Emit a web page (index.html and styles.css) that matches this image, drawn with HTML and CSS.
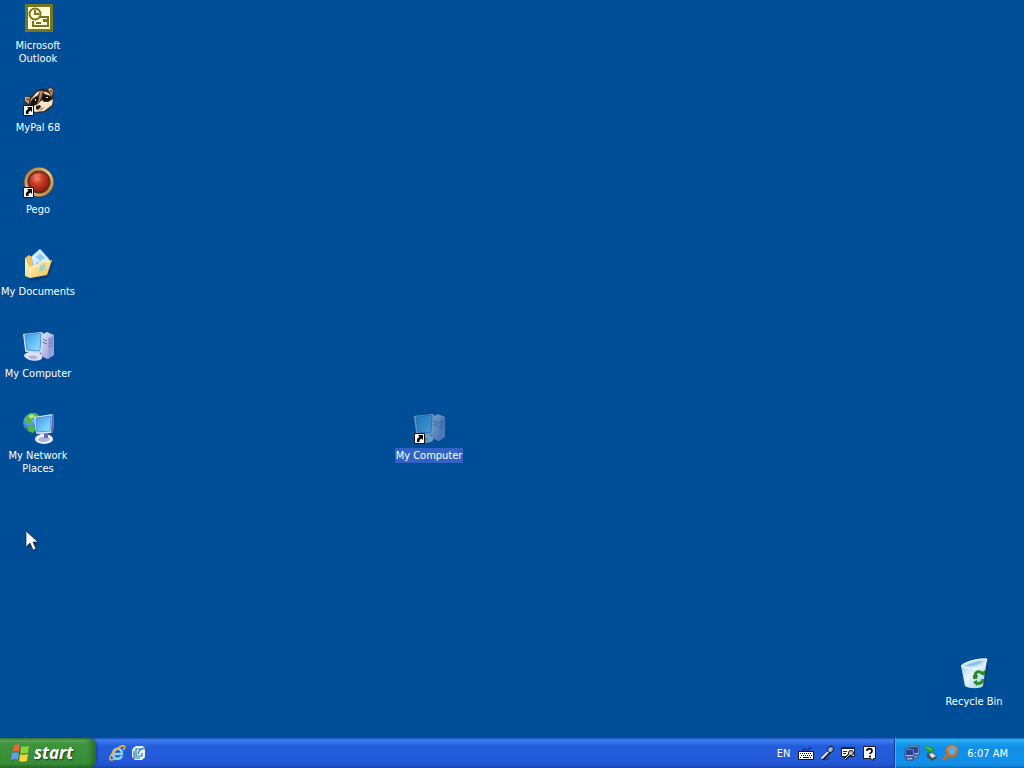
FILE: index.html
```html
<!DOCTYPE html>
<html lang="en">
<head>
<meta charset="utf-8">
<title>Desktop</title>
<link rel="stylesheet" href="styles.css">
</head>
<body>
<svg class="defs" aria-hidden="true">
  <defs>
    <linearGradient id="screen" x1="0" y1="0" x2="1" y2="1"><stop offset="0" stop-color="#3f9aea"/><stop offset=".5" stop-color="#62c0f6"/><stop offset="1" stop-color="#9ae6fc"/></linearGradient>
    <linearGradient id="case" x1="0" y1="0" x2="1" y2="1"><stop offset="0" stop-color="#e2e6f6"/><stop offset="1" stop-color="#8b94ce"/></linearGradient>
    <linearGradient id="folder" x1="0" y1="0" x2="1" y2="1"><stop offset="0" stop-color="#fffbd0"/><stop offset="1" stop-color="#f0c04c"/></linearGradient>
    <linearGradient id="bin" x1="0" y1="0" x2="1" y2="1"><stop offset="0" stop-color="#8fc4ee"/><stop offset=".45" stop-color="#e4f5fd"/><stop offset="1" stop-color="#9bcbe8"/></linearGradient>
    <radialGradient id="gem" cx=".4" cy=".32" r=".7"><stop offset="0" stop-color="#f48a72"/><stop offset=".4" stop-color="#cc3c28"/><stop offset="1" stop-color="#8c1a10"/></radialGradient>
    <linearGradient id="ring" x1="0" y1="0" x2="1" y2="1"><stop offset="0" stop-color="#a8703a"/><stop offset=".5" stop-color="#e8c690"/><stop offset="1" stop-color="#b07c40"/></linearGradient>
    <radialGradient id="globe" cx=".35" cy=".3" r=".8"><stop offset="0" stop-color="#8fd0ff"/><stop offset=".6" stop-color="#2d78d8"/><stop offset="1" stop-color="#123c94"/></radialGradient>
    <g id="shortcut"><path fill="#fff" stroke="#111" d="M1.500 21.500h10v10h-10z"/><path fill="#000" d="M5 23h5v5l-1.500-1.500L6.500 28v2H4v-3l2.500-2.500z"/></g>
    <g id="computer">
      <path fill="#6f7abb" d="M19 8l7 3v18l-6-2z"/>
      <path fill="url(#case)" d="M19 5l6-3 7 3v20l-7 4-6-4z"/>
      <path fill="#99a2d8" d="M26 8l6-3v20l-6 4z"/>
      <path stroke="#6570b4" fill="none" d="M27 11l4-2M27 14l4-2M27 17l4-2M20 9l5 2M20 12l5 2"/>
      <path fill="#858ec5" d="M8 21l8 1 1 5H8z"/>
      <path fill="#dfe3f4" d="M2 26c0-3 6-5 10-4 6 0 9 3 8 6-1 4-14 4-18-2z"/>
      <path fill="#aeb5dc" d="M6 27c2-3 9-2 10 1-2 2-7 2-10-1z"/>
      <path fill="#cddcf6" d="M1 4l18-2c1 0 1 0 2 1l-1 18c0 1-1 2-2 2L5 22c-1 0-2 0-2-2z"/>
      <path fill="url(#screen)" stroke="#3574c2" stroke-width=".7" d="M3 5l15-2 1 1-1 16-1 1-12-1z"/>
    </g>
  </defs>
</svg>
<main class="desktop">
  <nav class="icons" aria-label="Desktop icons">
    <button class="item"><svg class="icon" viewBox="0 0 32 32" aria-hidden="true">
      <path fill="#77761d" d="M3 2h28v28H3z"/><path fill="#fdfbd9" d="M6 5h22v22H6z"/>
      <path fill="none" stroke="#77761d" stroke-width="2" d="M17 15h9v9H11v-5"/><path fill="#77761d" d="M21 17h4v3h-4z"/><path stroke="#77761d" stroke-width="2" d="M14 21h5"/>
      <circle cx="13" cy="12" r="5.500" fill="#fdfbd9" stroke="#77761d" stroke-width="2"/><path fill="none" stroke="#77761d" stroke-width="2" d="M13 8v4h4"/>
    </svg><span class="label">Microsoft Outlook</span></button>
    <button class="item"><svg class="icon" viewBox="0 0 32 32" aria-hidden="true">
      <path fill="#3a2a22" d="M13 8c4-4 9-4 12-3l4-2 2 1 1 8-1 9c-2 4-6 6-9 7-4 2-8 1-10-1L6 21l-4-3 1-5 6-1z"/>
      <path fill="#d2a881" d="M3 13l5 0-1 4 0 3-4-3zM26 5l3-1 2 2-1 6-2-3z"/>
      <path fill="#5a3c2b" d="M4 15l3-1-1 3zM28 6l2 0-1 4z"/>
      <path fill="#f0dcc0" d="M11 13c2-4 5-6 7-6l-2 4-6 4-2 4 1-4zM21 8c3-1 6 1 8 4l-6-2z"/>
      <path fill="#b48966" d="M18 7l3 0-2 7-3 6-1-2 2-4z"/>
      <path fill="#f6e6cb" d="M16 20l4-4 2 2 4 0 5-3-1 6-8 6-9 1-3-3 2-3z"/>
      <path fill="#16100e" d="M9 18l5-5 3 1-1 4-4 3-3 0zM21 11l6 1 3 3-3 2-5 0-2-2z"/>
      <path fill="#2a1814" d="M14 22l4-1 1 2-3 3-2-1z"/>
      <path fill="#c58f6b" d="M19 24l4-1-3 3-3 1z"/>
      <path fill="#fff8e4" d="M13 15h1v2h-1zM24 13h2v1h-2z"/>
      <use href="#shortcut"/>
    </svg><span class="label">MyPal 68</span></button>
    <button class="item"><svg class="icon" viewBox="0 0 32 32" aria-hidden="true">
      <circle cx="17" cy="16" r="15" fill="#70431d"/><circle cx="17" cy="16" r="13" fill="#553017" stroke="url(#ring)" stroke-width="3"/>
      <circle cx="17" cy="16" r="10" fill="url(#gem)"/><path fill="#f8b19a" opacity=".6" d="M11 11c1-3 7-4 9-1-3-1-6-1-9 1z"/>
      <use href="#shortcut"/>
    </svg><span class="label">Pego</span></button>
    <button class="item"><svg class="icon" viewBox="0 0 32 32" aria-hidden="true">
      <path fill="#08305e" opacity=".6" d="M7 31l18-4 5-13 1 2-5 14-18 3z"/>
      <path fill="#edc75d" d="M3 10l4-3 4 3 13-2 4 5-20 16-3-1z"/>
      <path fill="#d4efff" stroke="#83bbe8" stroke-width=".7" d="M9 9l9-8 9 10-2 8-12 2z"/>
      <path fill="#79b9ec" opacity=".7" d="M14 9l4-4 5 5-5 3zM14 14l8-1 1 5-8 2z"/>
      <path fill="url(#folder)" d="M3 10l4 9 8-2 2-3 13-2-5 15-17 3-5-2z"/>
      <path fill="none" stroke="#fff9d5" d="M8 28l1-9 8-2 2-3 9-1"/>
      <path fill="#79ccec" opacity=".7" d="M18 18l6-3-2 7-5 2z"/>
    </svg><span class="label">My Documents</span></button>
    <button class="item"><svg class="icon" viewBox="0 0 32 32" aria-hidden="true"><use href="#computer"/></svg><span class="label">My Computer</span></button>
    <button class="item"><svg class="icon" viewBox="0 0 32 32" aria-hidden="true">
      <circle cx="11" cy="11" r="10" fill="url(#globe)"/>
      <path fill="#54b548" d="M3 6l5-5 6 0 3 3-3 4-4 0-1 4-5-1zM6 13l5 1 3 3-3 4-5-2z"/><path fill="#b4e48b" d="M6 4l4-2 3 2-4 3z"/>
      <path fill="#7e86bd" d="M18 19l7 1v6h-7z"/>
      <ellipse cx="22" cy="27" rx="9" ry="5" fill="#eef0fa"/><path fill="#aeb4d9" d="M16 28c1-4 10-4 12-1-3 4-9 4-12 1z"/><path fill="#5f68ac" d="M22 21h4v5h-4z"/>
      <path fill="#d4e2f8" d="M12 5l18-3 2 1-1 17-2 1-14 1-1-1z"/><path fill="#5966af" d="M30 2l2 1-1 17-2 1z"/>
      <path fill="url(#screen)" stroke="#397bc8" stroke-width=".7" d="M14 6l15-2-1 15-13 1z"/>
    </svg><span class="label">My Network Places</span></button>
  </nav>
  <button class="item item-shortcut selected"><svg class="icon" viewBox="0 0 32 32" aria-hidden="true"><g class="tinted"><use href="#computer"/></g><use href="#shortcut"/></svg><span class="label">My Computer</span></button>
  <button class="item item-bin"><svg class="icon" viewBox="0 0 32 32" aria-hidden="true">
    <path fill="#062f60" opacity=".5" d="M27 8h3l-4 20-4 3z"/>
    <path fill="url(#bin)" d="M3 8l19-5 7-2-4 27c-2 3-14 3-18 0z"/>
    <path fill="#c9e6f7" stroke="#f4fcff" d="M3 8c3-4 18-8 26-7-1 5-6 9-12 9-6 1-11 0-14-2z"/>
    <path fill="#8dbfe4" d="M7 8c5-3 12-5 18-5-3 4-12 6-18 5z"/>
    <path fill="none" stroke="#268c24" stroke-width="3" d="M17 17c1-4 5-4 7-2M25 21c0 4-4 5-7 4"/>
    <path fill="#268c24" d="M22 16l5-4v6zM19 22v6l-4-4zM15 17h5l-1 4h-4z"/>
  </svg><span class="label">Recycle Bin</span></button>
  <svg class="cursor" viewBox="0 0 14 22" aria-hidden="true"><path fill="#073468" opacity=".6" d="M3 3l11 12-5 1 3 5-3 1-3-6-3 3z"/><path fill="#fff" stroke="#172538" stroke-width=".7" d="M1 1v16l4-4 3 7 3-1-3-7h5z"/></svg>
</main>
<footer class="taskbar">
  <button class="start"><svg class="flag" viewBox="0 0 20 20" aria-hidden="true">
    <path fill="#164d17" opacity=".5" d="M4 4c3-2 5-1 7 0 3 2 5 1 8 0l-2 14c-3 1-5 1-7 0-3-2-5-1-8 0z"/>
    <path fill="#ef6338" d="M4 2c2-1 4-1 6 0L9 9C7 8 5 8 3 9z"/><path fill="#8bd33d" d="M11 3c2 1 4 1 8 0l-1 7c-3 1-6 1-8 0z"/><path fill="#629cf2" d="M2 10c3-1 5-1 7 0l-1 7c-2-1-4-1-7 0z"/><path fill="#fad43b" d="M10 11c2 1 5 1 8 0l-1 7c-3 1-6 1-8 0z"/>
  </svg><span>start</span></button>
  <nav class="quick" aria-label="Quick launch">
    <button class="tool" aria-label="Internet Explorer"><svg viewBox="0 0 16 16"><path fill="none" stroke="#86d3ff" stroke-width="2.600" d="M13 11c-2 4-9 4-9-2 0-7 9-7 9 0H5"/><path fill="none" stroke="#efb52d" stroke-width="1.600" d="M1 15c-2-4 10-15 14-14 2 1 0 3-1 4M1 15c1 0 3 0 5-1"/></svg></button>
    <button class="tool" aria-label="Show desktop"><svg viewBox="0 0 16 16"><path fill="#e5f6ff" d="M2 3l3-2h7l2 3v8l-3 3H4l-3-3V6z"/><path fill="none" stroke="#2472b6" stroke-width="1.200" d="M10 4H5v7h6V8M3 6v7h6M7 9l1-3 4-3"/><path fill="#ad6b52" d="M13 2l2 1-2 2-1-1z"/></svg></button>
  </nav>
  <div class="language">
    <button class="lang">EN</button>
    <button class="tool" aria-label="Keyboard"><svg viewBox="0 0 16 16"><path fill="#fff" stroke="#111" d="M.5 6.500h15v8H.5z"/><path fill="none" stroke="#111" stroke-dasharray="1 1" d="M2 8.500h12M3 10.500h11M2 12.500h2M12 12.500h2"/><path stroke="#111" d="M5 12.500h6"/><path fill="none" stroke="#152c5a" d="M5 6V4h3v1h3V3h3"/></svg></button>
    <button class="tool" aria-label="Microphone"><svg viewBox="0 0 16 16"><path fill="none" stroke="#132449" d="M4 14l3 1 3-2"/><path stroke="#111e3c" stroke-width="4" stroke-linecap="round" d="M4 13l6-6"/><path stroke="#dfe6ef" stroke-width="2" stroke-linecap="round" d="M3 13l7-7"/><path stroke="#111e3c" stroke-width="6" stroke-linecap="round" d="M11 5l1-1"/><path stroke="#a8b4c8" stroke-width="4" stroke-linecap="round" d="M11 5l1-1"/></svg></button>
    <button class="tool" aria-label="Handwriting"><svg viewBox="0 0 16 16"><path fill="#fff" stroke="#111b35" d="M1.500 2.500h13v9h-13z"/><path fill="#15264d" d="M2 2h12v2H2z"/><path stroke="#222" d="M3 6.500h4M3 8.500h3"/><path stroke="#111" stroke-width="3" d="M5 14l5-5"/><circle cx="11" cy="8" r="2.500" fill="#b8c2d0" stroke="#111"/><path stroke="#e8edf4" d="M5 14l5-5"/></svg></button>
    <button class="tool" aria-label="Help"><svg viewBox="0 0 16 16"><path fill="#fff" stroke="#171717" d="M2.500 1.500h12v12h-2v2l-3-2h-7z"/><path fill="none" stroke="#111" stroke-width="1.800" d="M6 6c0-3 5-3 5 0 0 2-2 2-2 3M9 10.500v2"/></svg></button>
  </div>
  <div class="tray">
    <button class="tool" aria-label="Network"><svg viewBox="0 0 16 16"><path fill="#aab6dd" stroke="#334476" stroke-width=".8" d="M5 1h10v9H5zM9 10h4v3H9z"/><path fill="#24499d" d="M6 2h8v6H6z"/><path fill="#aab6dd" stroke="#29345f" stroke-width=".8" d="M1 4h9v8H1zM3 12h6v3H2z"/><path fill="#293f91" d="M2 5h7v5H2z"/></svg></button>
    <button class="tool" aria-label="Safely remove hardware"><svg viewBox="0 0 16 16"><path fill="#42515c" d="M4 8l5-1 5 4-1 3-4 2-5-4z"/><path fill="#dce7e6" d="M6 9l3-1 4 3-4 2z"/><path fill="#239c37" d="M1 2l3-1 3 2V1l5 4-5 4V7L3 5z"/><path stroke="#7de065" d="M3 2l6 3"/></svg></button>
    <button class="tool" aria-label="Search"><svg viewBox="0 0 16 16"><circle cx="10" cy="6" r="5" fill="#52b2e9" stroke="#c56d25" stroke-width="2.600"/><path stroke="#c56d25" stroke-width="3" d="M7 9l-6 6"/><path stroke="#f39a3e" fill="none" d="M5 6c0-6 9-6 10-1"/></svg></button>
    <time class="clock" datetime="06:07">6:07 AM</time>
  </div>
</footer>
</body>
</html>
```
FILE: styles.css
```css
* { box-sizing: border-box; }

body {
  display: flex;
  flex-direction: column;
  min-height: 100vh;
  margin: 0;
  overflow: hidden;
  background: #004e98;
  color: #fff;
  font: 11px/13px Tahoma, "DejaVu Sans Condensed", "Noto Sans", sans-serif;
}

button {
  margin: 0;
  padding: 0;
  border: 0;
  background: none;
  color: inherit;
  font: inherit;
}

svg { display: block; overflow: visible; }
.defs { position: absolute; width: 0; height: 0; }

.desktop { position: relative; flex: 1; }

.icons {
  display: grid;
  grid-auto-rows: 82px;
  width: 76px;
}

.item {
  display: flex;
  flex-direction: column;
  align-items: center;
  gap: 4px;
  width: 76px;
  padding-top: 2px;
}

.icon { width: 32px; height: 32px; }
.label { padding: 1px 0; }
.selected .label { padding: 1px; background: #3163c5; white-space: nowrap; }
.tinted { opacity: .5; }

.item-shortcut { position: absolute; left: 391px; top: 410px; }
.item-bin { position: absolute; right: 12px; bottom: 29px; }
.cursor { position: absolute; left: 25px; top: 530px; width: 14px; height: 22px; }

.taskbar {
  display: flex;
  height: 30px;
  background: linear-gradient(#1f4fba 0, #3e80f0 2px, #3474ea 4px, #245ddb 8px, #2359d8 24px, #2050c6 28px, #1941a5 30px);
}

.start {
  display: flex;
  align-items: center;
  gap: 4px;
  width: 96px;
  padding-left: 10px;
  border-radius: 0 8px 8px 0;
  background: linear-gradient(#307533 0, #62ad60 2px, #3f953e 6px, #388f38 20px, #398e38 26px, #246526 30px);
  box-shadow: inset -4px 0 5px #276c2b, 1px 0 2px #173d91;
  font: italic bold 17px/24px "Open Sans", sans-serif;
  text-shadow: 1px 1px 2px #173d18;
}

.flag { width: 20px; height: 20px; }
.tool { width: 16px; height: 16px; }
.tool svg { width: 16px; height: 16px; }

.quick {
  display: flex;
  align-items: center;
  gap: 6px;
  padding-left: 13px;
}

.language {
  display: flex;
  align-items: center;
  gap: 5px;
  margin-left: auto;
  padding-right: 17px;
}

.lang { margin-right: 3px; }

.tray {
  display: flex;
  align-items: center;
  gap: 3px;
  padding: 0 16px 0 9px;
  border-left: 1px solid #103e96;
  background: linear-gradient(#0c6bc0 0, #30b7f3 2px, #199ced 5px, #108ee8 10px, #1290e9 25px, #1187da 28px, #0c62b1 30px);
  box-shadow: inset 1px 0 #36bdf4;
}

.clock { margin-left: 6px; }
```
